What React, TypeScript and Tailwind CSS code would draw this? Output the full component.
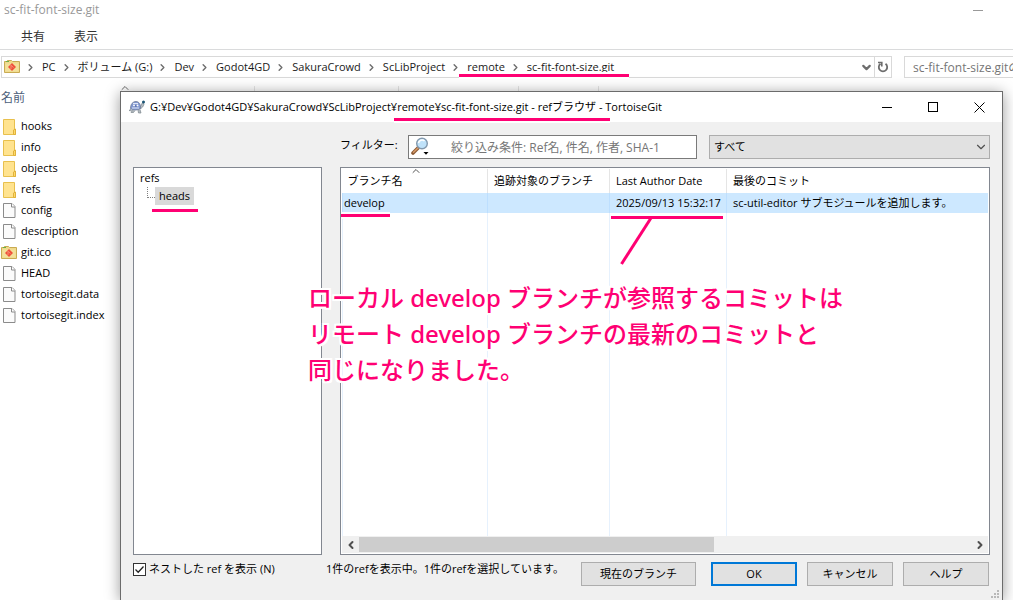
import { useState } from 'react'
import { ChevronDown, ChevronLeft, ChevronRight, ChevronUp } from 'lucide-react'

const crumbs = ['PC', 'ボリューム (G:)', 'Dev', 'Godot4GD', 'SakuraCrowd', 'ScLibProject', 'remote', 'sc-fit-font-size.git'];

const files = [
    { name: 'hooks', kind: 'folder' },
    { name: 'info', kind: 'folder' },
    { name: 'objects', kind: 'folder' },
    { name: 'refs', kind: 'folder' },
    { name: 'config', kind: 'file' },
    { name: 'description', kind: 'file' },
    { name: 'git.ico', kind: 'git' },
    { name: 'HEAD', kind: 'file' },
    { name: 'tortoisegit.data', kind: 'file' },
    { name: 'tortoisegit.index', kind: 'file' },
];

function FolderIcon() {
    return (
        <svg width="16" height="16" viewBox="0 0 16 16">
            <path d="M2.500 .5h11v10l1 1v4h-12z" fill="#ffe38f" stroke="#e8c04d" />
            <path d="M12.500 15.500v-4.500l2-1v5.500z" fill="#ffd968" stroke="#e0b23c" />
        </svg>
    )
}

function FileIcon() {
    return (
        <svg width="16" height="16" viewBox="0 0 16 16">
            <path d="M2.500 .5h8.500l3 3v11h-11.500z" fill="#fbfbfb" stroke="#8b8b8b" />
            <path d="M10.500 .5v3.500h3.500" fill="#fff" stroke="#8b8b8b" />
        </svg>
    )
}

function GitFolderIcon() {
    return (
        <svg width="16" height="16" viewBox="0 0 16 16">
            <path d="M.5 2.500h2l1-1h4l1 1h7v11h-15z" fill="#f0d98a" stroke="#c9ab52" />
            <path d="M1.500 4.500h13v8h-13z" fill="#f3e09a" />
            <path d="M2 2.500h3" stroke="#69b04a" />
            <path d="M8 4l4 4-4 4-4-4z" fill="#f0503a" />
            <path d="M7 6v4M7.200 6.500l2.300 2" stroke="#f6a184" strokeWidth=".8" />
        </svg>
    )
}

function RefreshIcon() {
    return (
        <svg width="12" height="12" viewBox="0 0 12 12" fill="none" stroke="currentColor">
            <path d="M8.500 2.800A4.200 4.200 0 1 1 3.500 2.800" strokeWidth="1.800" />
            <path d="M4.800 5.500V1.500H1" strokeWidth="1.600" />
        </svg>
    )
}

function TortoiseIcon() {
    return (
        <svg width="16" height="14" viewBox="0 0 16 14">
            <path d="M2 9l-2 1.500 3 .5M4 10l-2 2.500h2.500l1.500-2M9 10l.5 3h2.500l-1-3.500" fill="#b4bcc2" stroke="#7d878e" strokeWidth=".7" />
            <path d="M11 7c1-1 1.500-3 2.500-4.500l1.500 1.500c-.5 2.500-2 4-4 5z" fill="#b4bcc2" stroke="#7d878e" strokeWidth=".7" />
            <circle cx="14.500" cy="2" r="1.500" fill="#1c5575" />
            <path d="M1.500 8.500C1.500 4 4 1.500 7 1.500s5 3 4.500 7c-3 2-7 2-10 0z" fill="#8198d2" stroke="#727d96" strokeWidth=".8" />
            <path d="M4 3.500h5M3 8h7" stroke="#dfe6f6" />
            <path d="M4 6h5" stroke="#4a5f9c" />
            <circle cx="5" cy="5.500" r="1" fill="#fff" />
            <circle cx="8.500" cy="5.500" r="1" fill="#fff" />
        </svg>
    )
}

function MagnifierIcon() {
    return (
        <svg width="20" height="20" viewBox="0 0 20 20">
            <path d="M7.500 10.500L2 16" stroke="#8c5a35" strokeWidth="3.600" strokeLinecap="round" />
            <path d="M7.500 10.500L2.500 15.300" stroke="#d69a68" strokeWidth="1.500" strokeLinecap="round" />
            <circle cx="11" cy="6.500" r="5.300" fill="#bfe2fa" stroke="#8298ad" strokeWidth="1.400" />
            <path d="M7.500 6a3.600 3.600 0 0 1 6-2" stroke="#fff" strokeWidth="1.600" fill="none" />
            <path d="M12.500 15h5L15 17.800z" fill="#000" />
        </svg>
    )
}

function FileEntry({ name, kind }: { name: string; kind: string }) {
    return (
        <li className="flex h-[21px] items-center gap-1">
            {kind === 'folder' && <FolderIcon />}
            {kind === 'file' && <FileIcon />}
            {kind === 'git' && <GitFolderIcon />}
            <span>{name}</span>
        </li>
    )
}

function Explorer() {
    return (
        <div className="h-full bg-white">
            <div className="flex h-5 items-center justify-between pl-1 pr-[30px]">
                <span className="text-xs text-[#999999]">sc-fit-font-size.git</span>
                <button aria-label="最小化" className="h-px w-[10px] bg-[#999999]" />
            </div>

            <div className="flex h-[30px] items-center gap-[29px] border-b border-[#dadbdc] pl-[21px] pt-1 text-xs text-[#333333]">
                <button>共有</button>
                <button>表示</button>
            </div>

            <div className="flex gap-3 overflow-hidden pl-px pt-[6px]">
                <nav className="flex h-[22px] min-w-0 flex-1 items-center border border-[#d9d9d9] pl-[2px]">
                    <GitFolderIcon />
                    {crumbs.map((c) => (
                        <div key={c} className="flex shrink-0 items-center">
                            <ChevronRight className="ml-[5px] mr-[6px] text-[#6d6d6d]" size={11} strokeWidth={3} />
                            <a href="#" className="text-[#1a1a1a]">{c}</a>
                        </div>
                    ))}
                    <button aria-label="履歴" className="ml-auto mr-px text-[#6d6d6d]">
                        <ChevronDown size={13} strokeWidth={4} />
                    </button>
                    <button aria-label="更新" className="flex h-full w-[17px] items-center justify-center border-l border-[#d9d9d9] text-[#6d6d6d]">
                        <RefreshIcon />
                    </button>
                </nav>
                <div className="h-[22px] w-[109px] overflow-hidden border border-r-0 border-[#d9d9d9] pl-2">
                    <input
                        type="text"
                        aria-label="検索"
                        placeholder="sc-fit-font-size.gitの検索"
                        className="h-full w-[200px] text-xs outline-none placeholder:text-[#767676]"
                    />
                </div>
            </div>

            <div className="flex h-[38px] items-start">
                <div className="flex h-full w-[254px] items-center pl-px pt-px text-xs text-[#4c607a]">
                    名前
                    <ChevronUp className="mb-[20px] ml-[94px] text-[#6d6d6d]" size={12} strokeWidth={2} />
                </div>
                <div className="mt-2 h-4 w-[144px] border-l border-[#e5e5e5]" />
                <div className="mt-2 h-4 w-[120px] border-l border-[#e5e5e5]" />
                <div className="mt-2 h-4 w-20 border-l border-[#e5e5e5]" />
                <div className="mt-2 h-4 w-20 border-l border-[#e5e5e5]" />
            </div>

            <ul className="pl-px text-black">
                {files.map((f) => <FileEntry key={f.name} name={f.name} kind={f.kind} />)}
            </ul>
        </div>
    )
}

function BranchTable() {
    return (
        <div className="flex min-w-0 flex-1 flex-col border border-[#828790] bg-white p-px">
            <table className="w-full flex-1 table-fixed border-collapse text-left">
                <thead>
                    <tr className="h-6 whitespace-nowrap">
                        <th className="relative w-[145px] border-r border-[#e5e5e5] pl-[5px] font-normal">
                            ブランチ名
                            <ChevronUp className="absolute left-[67px] -top-1 text-[#555555]" size={12} strokeWidth={2} />
                        </th>
                        <th className="w-[122px] border-r border-[#e5e5e5] pl-[6px] font-normal">追跡対象のブランチ</th>
                        <th className="w-[117px] border-r border-[#e5e5e5] pl-[6px] font-normal">Last Author Date</th>
                        <th className="pl-[6px] font-normal">最後のコミット</th>
                    </tr>
                </thead>
                <tbody>
                    <tr className="h-5 whitespace-nowrap bg-[#cde8ff]">
                        <td className="border-x border-[#bddfff] pl-px">develop</td>
                        <td className="border-r border-[#bddfff]" />
                        <td className="border-r border-[#bddfff] pl-[6px]">2025/09/13 15:32:17</td>
                        <td className="pl-[6px]">sc-util-editor サブモジュールを追加します。</td>
                    </tr>
                    <tr>
                        <td className="border-x border-[#e6f1fd]" />
                        <td className="border-r border-[#e6f1fd]" />
                        <td className="border-r border-[#e6f1fd]" />
                        <td />
                    </tr>
                </tbody>
            </table>
            <div className="flex h-[17px] items-center bg-[#f0f0f0] text-[#505050]">
                <button aria-label="左へ" className="flex h-full w-[17px] items-center justify-center"><ChevronLeft size={12} strokeWidth={4} /></button>
                <div className="h-[15px] flex-1">
                    <div className="h-full w-[58%] bg-[#cdcdcd]" />
                </div>
                <button aria-label="右へ" className="flex h-full w-[17px] items-center justify-center"><ChevronRight size={12} strokeWidth={4} /></button>
            </div>
        </div>
    )
}

function RefBrowser() {
    const [nested, setNested] = useState(true);
    const buttonStyle = 'h-6 w-[86px] border border-[#adadad] bg-[#e1e1e1]';

    return (
        <div className="absolute bottom-0 left-[120px] right-[10px] top-[91px] flex flex-col border border-b-0 border-[#6b6b6b] bg-[#f0f0f0] text-black shadow-[0_2px_14px_rgba(0,0,0,0.4)]">
            <div className="flex h-[30px] shrink-0 items-center bg-white pl-2">
                <TortoiseIcon />
                <h1 className="ml-[5px] flex-1 truncate">
                    G:¥Dev¥Godot4GD¥SakuraCrowd¥ScLibProject¥remote¥sc-fit-font-size.git - refブラウザ - TortoiseGit
                </h1>
                <div className="flex h-full">
                    <button aria-label="最小化" className="flex w-[46px] items-center justify-center">
                        <span className="h-px w-[10px] bg-black" />
                    </button>
                    <button aria-label="最大化" className="flex w-[46px] items-center justify-center">
                        <span className="size-[10px] border border-black" />
                    </button>
                    <button aria-label="閉じる" className="flex w-[46px] items-center justify-center">
                        <svg width="11" height="11" viewBox="0 0 11 11"><path d="M.5 .5l10 10M10.500 .5l-10 10" stroke="#000" /></svg>
                    </button>
                </div>
            </div>

            <div className="flex min-h-0 flex-1 flex-col px-3 pb-[14px] pt-[13px]">
                <div className="mb-2 flex h-6 items-center pl-[207px]">
                    <label htmlFor="filter" className="w-[68px] pb-[3px]">フィルター:</label>
                    <div className="flex h-6 flex-1 items-center border border-[#7a7a7a] bg-white pl-[2px]">
                        <MagnifierIcon />
                        <input
                            id="filter"
                            type="text"
                            placeholder="絞り込み条件: Ref名, 件名, 作者, SHA-1"
                            className="ml-5 h-full min-w-0 flex-1 text-xs outline-none placeholder:text-[#767676]"
                        />
                    </div>
                    <div className="relative ml-3 w-[281px]">
                        <select aria-label="種類" className="h-6 w-full appearance-none border border-[#adadad] bg-[#e1e1e1] pl-1 outline-none">
                            <option>すべて</option>
                        </select>
                        <ChevronDown className="pointer-events-none absolute right-[2px] top-[5px] text-[#505050]" size={14} strokeWidth={2} />
                    </div>
                </div>

                <div className="flex min-h-0 flex-1 gap-[18px]">
                    <div className="w-[189px] border border-[#828790] bg-white pl-[6px] pt-px">
                        <div className="h-[18px] leading-[18px]">refs</div>
                        <div className="flex items-start pl-[7px]">
                            <span className="h-[11px] w-2 border-b border-l border-dotted border-[#808080]" />
                            <span className="h-[18px] bg-[#d9d9d9] px-1 leading-[18px]">heads</span>
                        </div>
                    </div>
                    <BranchTable />
                </div>

                <div className="mt-[7px] flex h-6 items-center pr-px">
                    <label className="flex w-[193px] items-center gap-[3px] pb-[10px]">
                        <span className="relative size-[13px]">
                            <input
                                type="checkbox"
                                checked={nested}
                                onChange={(e) => setNested(e.target.checked)}
                                className="block size-[13px] appearance-none border border-[#333333] bg-white"
                            />
                            {nested && (
                                <svg className="pointer-events-none absolute inset-0" width="13" height="13" viewBox="0 0 13 13">
                                    <path d="M2.500 6.500l2.700 2.700 5.300-5.700" fill="none" stroke="#222" strokeWidth="1.300" />
                                </svg>
                            )}
                        </span>
                        <span>ネストした ref を表示 (N)</span>
                    </label>
                    <span className="flex-1 whitespace-nowrap pb-[10px]">1件のrefを表示中。1件のrefを選択しています。</span>
                    <div className="flex gap-[10px]">
                        <button className="mr-[5px] h-6 w-[115px] border border-[#adadad] bg-[#e1e1e1]">現在のブランチ</button>
                        <button className="h-6 w-[86px] border-2 border-[#0078d7] bg-[#e1e1e1]">OK</button>
                        <button className={buttonStyle}>キャンセル</button>
                        <button className={buttonStyle}>ヘルプ</button>
                    </div>
                </div>
            </div>

            <svg className="absolute bottom-[2px] right-[3px]" width="8" height="8" viewBox="0 0 8 8">
                <path d="M6 0h2v2h-2zM3 3h2v2h-2zM6 3h2v2h-2zM0 6h2v2h-2zM3 6h2v2h-2zM6 6h2v2h-2z" fill="#b8b8b8" />
            </svg>
        </div>
    )
}

// red pen marks and the note written over the windows
function Annotations() {
    const marks = 'M459 75.500h170M394 119.500h216M152 210.500h46M341 215.500h49M611 217.500h112';

    return (
        <div className="pointer-events-none absolute inset-0">
            <svg width="1013" height="600" viewBox="0 0 1013 600" fill="none">
                <path d={marks} stroke="#fff" strokeWidth="7" />
                <path d="M651 218L621.500 264" stroke="#fff" strokeWidth="6" />
                <path d={marks} stroke="#ff0073" strokeWidth="3" />
                <path d="M651 218L621.500 264" stroke="#ff0073" strokeWidth="3" />
            </svg>
            <p className="absolute left-[308px] top-[280px] whitespace-nowrap font-['Noto_Sans','Noto_Sans_CJK_JP',sans-serif] text-2xl/[36px] font-medium text-[#ff0073] [text-shadow:2px_0_#fff,-2px_0_#fff,0_2px_#fff,0_-2px_#fff,2px_2px_#fff,-2px_-2px_#fff,2px_-2px_#fff,-2px_2px_#fff]">
                ローカル develop ブランチが参照するコミットは<br />
                リモート develop ブランチの最新のコミットと<br />
                同じになりました。
            </p>
        </div>
    )
}

function App() {
    return (
        <div className="relative h-screen overflow-hidden bg-white font-['Open_Sans','Noto_Sans_CJK_JP',sans-serif] text-[11px]">
            <Explorer />
            <RefBrowser />
            <Annotations />
        </div>
    )
}

export default App
